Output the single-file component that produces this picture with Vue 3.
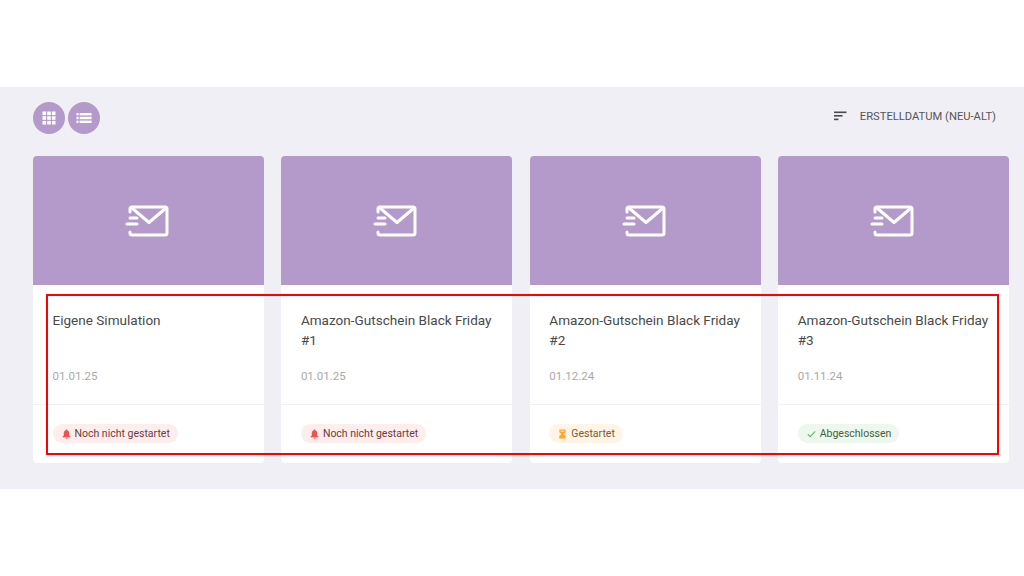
<script setup>
const campaigns = [
  { id: 1, title: 'Eigene Simulation', date: '01.01.25', status: 'todo', label: 'Noch nicht gestartet' },
  { id: 2, title: 'Amazon-Gutschein Black Friday #1', date: '01.01.25', status: 'todo', label: 'Noch nicht gestartet' },
  { id: 3, title: 'Amazon-Gutschein Black Friday #2', date: '01.12.24', status: 'running', label: 'Gestartet' },
  { id: 4, title: 'Amazon-Gutschein Black Friday #3', date: '01.11.24', status: 'done', label: 'Abgeschlossen' }
]
</script>

<template>
  <div class="page">
    <section class="panel">
      <div class="toolbar">
        <div class="views">
          <button class="view-btn">
            <svg width="16" height="16" viewBox="0 0 16 16" fill="#fff">
              <rect x="1.5" y="1.5" width="3.6" height="3.6" /><rect x="6.2" y="1.5" width="3.6" height="3.6" /><rect x="10.9" y="1.5" width="3.6" height="3.6" />
              <rect x="1.5" y="6.2" width="3.6" height="3.6" /><rect x="6.2" y="6.2" width="3.6" height="3.6" /><rect x="10.9" y="6.2" width="3.6" height="3.6" />
              <rect x="1.5" y="10.9" width="3.6" height="3.6" /><rect x="6.2" y="10.9" width="3.6" height="3.6" /><rect x="10.9" y="10.9" width="3.6" height="3.6" />
            </svg>
          </button>
          <button class="view-btn">
            <svg width="16" height="12" viewBox="0 0 16 12" fill="#fff">
              <rect x="0.5" y="1" width="2" height="2.4" /><rect x="3.6" y="1" width="12" height="2.4" />
              <rect x="0.5" y="4.8" width="2" height="2.4" /><rect x="3.6" y="4.8" width="12" height="2.4" />
              <rect x="0.5" y="8.6" width="2" height="2.4" /><rect x="3.6" y="8.6" width="12" height="2.4" />
            </svg>
          </button>
        </div>
        <div class="sort">
          <svg width="13" height="10" viewBox="0 0 13 10" fill="#4a4a4a">
            <rect x="0" y="0.5" width="12.5" height="1.6" /><rect x="0" y="4" width="8.5" height="1.6" /><rect x="0" y="7.6" width="4.5" height="1.6" />
          </svg>
          <span>ERSTELLDATUM (NEU-ALT)</span>
        </div>
      </div>

      <div class="cards">
        <article v-for="c in campaigns" :key="c.id" class="card">
          <div class="card-image">
            <svg width="44" height="32" viewBox="0 0 44 32" fill="none" stroke="#fff" stroke-width="3" stroke-linecap="round" stroke-linejoin="round">
              <path d="M5 7V4a2 2 0 0 1 2-2h33a2 2 0 0 1 2 2v24a2 2 0 0 1-2 2H7a2 2 0 0 1-2-2v-1" />
              <path d="M7 3l17 14.500L41 3" />
              <path d="M5 13h7M2 19h10" />
            </svg>
          </div>
          <div class="card-body">
            <h3 class="card-title">{{ c.title }}</h3>
            <p class="card-date">{{ c.date }}</p>
          </div>
          <div class="card-footer">
            <span :class="['chip', `chip-${c.status}`]">
              <svg v-if="c.status === 'todo'" class="chip-icon" width="9" height="10" viewBox="0 0 10 11" fill="#ef5350">
                <path d="M5 0.300a.8.8 0 0 0-.8.8v.3C2.800 1.800 2 3 2 4.500v2.700L.8 8.300v.7h8.400v-.7L8 7.200V4.500C8 3 7.200 1.800 5.800 1.400v-.3a.8.8 0 0 0-.8-.8zM3.900 9.600a1.100 1.100 0 0 0 2.200 0z" />
              </svg>
              <svg v-else-if="c.status === 'running'" class="chip-icon" width="9" height="10" viewBox="0 0 10 11" fill="#ffa726">
                <path d="M1.500 0.500h7v3L6 5.500l2.500 2v3h-7v-3l2.500-2-2.500-2z" />
                <path d="M3 2h4v1H3z" fill="#fff3e6" />
              </svg>
              <svg v-else class="chip-icon" width="9" height="8" viewBox="0 0 11 9" fill="none" stroke="#66bb6a" stroke-width="1.400">
                <path d="M1 4.800l3 3 6-6.500" />
              </svg>
              {{ c.label }}
            </span>
          </div>
        </article>
      </div>
    </section>

    <!-- Rote Markierung über den Karten -->
    <div class="highlight"></div>
  </div>
</template>

<style>
html, body {
  margin: 0;
  background: #fff;
}
</style>

<style scoped>
.page {
  position: relative;
  width: 1024px;
  height: 576px;
  padding-top: 87px;
  box-sizing: border-box;
  overflow: hidden;
  background: #fff;
  font-family: Roboto, "Liberation Sans", sans-serif;
}

.panel {
  height: 402px;
  box-sizing: border-box;
  background: #f0eff5;
  padding: 15px 15px 0 33px;
}

.toolbar {
  display: flex;
  justify-content: space-between;
  align-items: center;
  height: 32px;
  margin-bottom: 22px;
}

.views {
  display: flex;
  gap: 3px;
}

.view-btn {
  width: 32px;
  height: 32px;
  padding: 0;
  border: none;
  border-radius: 50%;
  background: #b49aca;
  display: flex;
  align-items: center;
  justify-content: center;
}

.sort {
  display: flex;
  align-items: center;
  gap: 13px;
  padding-right: 13px;
  margin-top: -4px;
  font-size: 11.200px;
  color: #555;
}

.cards {
  display: grid;
  grid-template-columns: repeat(4, 1fr);
  gap: 17.600px;
}

.card {
  height: 307px;
  background: #fff;
  border-radius: 4px;
  overflow: hidden;
  display: flex;
  flex-direction: column;
}

.card-image {
  height: 129px;
  flex-shrink: 0;
  background: #b49aca;
  display: flex;
  align-items: center;
  justify-content: center;
}

.card-image svg {
  margin-left: -3px;
}

.card-body {
  height: 120px;
  box-sizing: border-box;
  padding: 25px 15px 0 19.500px;
  border-bottom: 1px solid #f1f0f4;
}

.card-title {
  margin: 0;
  font-size: 13.550px;
  font-weight: 400;
  line-height: 20px;
  height: 40px;
  color: #4a4a4a;
}

.card-date {
  margin: 16px 0 0;
  font-size: 11.500px;
  line-height: 20px;
  color: #a9a9a9;
}

.card-footer {
  display: flex;
  padding: 19px 19.500px 0;
}

.chip {
  display: inline-flex;
  align-items: center;
  gap: 4px;
  height: 19px;
  padding: 0 8px 0 9px;
  border-radius: 10px;
  font-size: 10.500px;
}

.chip-icon {
  flex-shrink: 0;
}

.chip-todo {
  background: #fdeded;
  color: #6f3a3a;
}

.chip-running {
  background: #fff4e5;
  color: #7a5a30;
}

.chip-done {
  background: #edf7ed;
  color: #3f6142;
}

.highlight {
  position: absolute;
  left: 46px;
  top: 294px;
  width: 953px;
  height: 161px;
  box-sizing: border-box;
  border: 2px solid #f00;
  pointer-events: none;
}
</style>
